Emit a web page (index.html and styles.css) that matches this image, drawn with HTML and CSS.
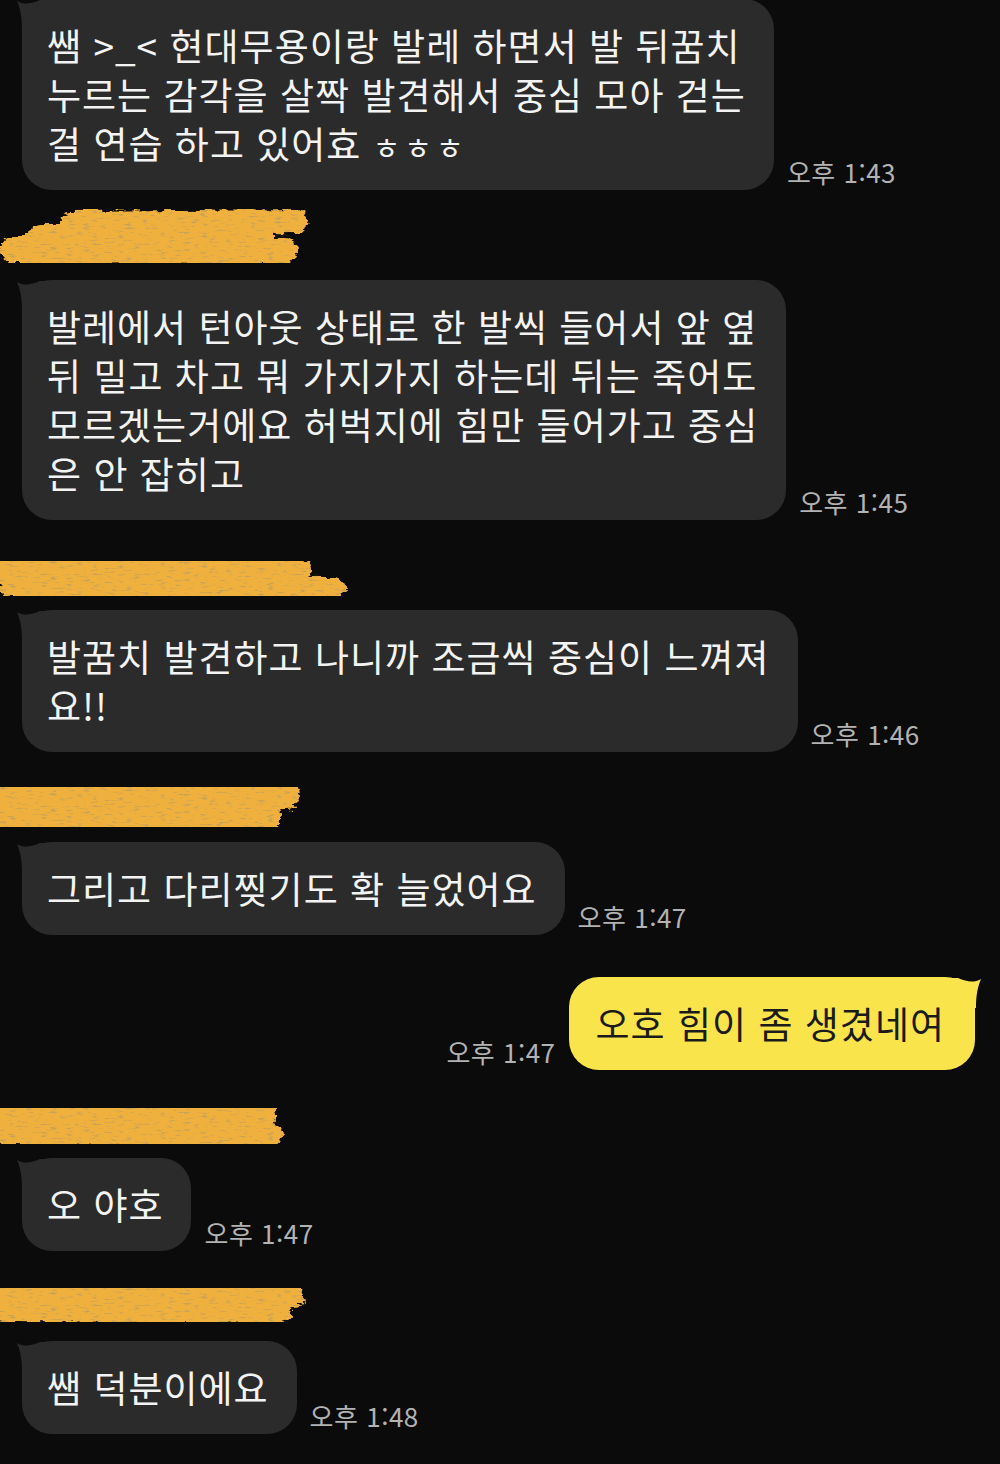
FILE: index.html
```html
<!DOCTYPE html>
<html lang="ko">
<head>
<meta charset="utf-8">
<title>Chat</title>
<link rel="stylesheet" href="styles.css">
</head>
<body>
<div class="chat">
  <svg class="defs" width="0" height="0" aria-hidden="true">
    <defs>
      <filter id="rough" x="-10%" y="-40%" width="120%" height="180%">
        <feTurbulence type="fractalNoise" baseFrequency="0.09 0.22" numOctaves="3" seed="3" result="n"/>
        <feDisplacementMap in="SourceGraphic" in2="n" scale="10" xChannelSelector="R" yChannelSelector="G" result="d"/>
        <feTurbulence type="fractalNoise" baseFrequency="0.12 0.5" numOctaves="2" seed="9" result="n2"/>
        <feColorMatrix in="n2" type="matrix" values="0 0 0 0 0.55  0 0 0 0 0.36  0 0 0 0 0.1  0 0 0 5 -2.9" result="spots"/>
        <feComposite in="spots" in2="d" operator="in" result="s2"/>
        <feMerge><feMergeNode in="d"/><feMergeNode in="s2"/></feMerge>
      </filter>
    </defs>
  </svg>

  <svg class="scribble-top" viewBox="0 0 120 14" aria-hidden="true">
    <g filter="url(#rough)" stroke="#efb03d" stroke-linecap="round" fill="none">
      <path d="M-4 0 L96 0" stroke-width="10"/>
    </g>
  </svg>

  <div class="row in first">
    <div class="bubble">쌤 &gt;_&lt; 현대무용이랑 발레 하면서 발 뒤꿈치<br>누르는 감각을 살짝 발견해서 중심 모아 걷는<br>걸 연습 하고 있어효 <span class="jamo">ㅎㅎㅎ</span></div>
    <span class="time">오후 1:43</span>
  </div>

  <div class="name">
    <svg viewBox="0 0 360 90" aria-hidden="true">
      <g filter="url(#rough)" stroke="#efb03d" stroke-linecap="round" fill="none">
        <path d="M72 33 L296 31" stroke-width="24"/>
        <path d="M40 46 L262 46" stroke-width="24"/>
        <path d="M14 60 L284 61" stroke-width="28"/>
      </g>
    </svg>
  </div>

  <div class="row in">
    <div class="bubble">발레에서 턴아웃 상태로 한 발씩 들어서 앞 옆<br>뒤 밀고 차고 뭐 가지가지 하는데 뒤는 죽어도<br>모르겠는거에요 허벅지에 힘만 들어가고 중심<br>은 안 잡히고</div>
    <span class="time">오후 1:45</span>
  </div>

  <div class="name">
    <svg viewBox="0 0 360 90" aria-hidden="true">
      <g filter="url(#rough)" stroke="#efb03d" stroke-linecap="round" fill="none">
        <path d="M8 51 L298 49" stroke-width="26"/>
        <path d="M10 67 L334 68" stroke-width="22"/>
      </g>
    </svg>
  </div>

  <div class="row in">
    <div class="bubble">발꿈치 발견하고 나니까 조금씩 중심이 느껴져<br>요!!</div>
    <span class="time">오후 1:46</span>
  </div>

  <div class="name">
    <svg viewBox="0 0 360 90" aria-hidden="true">
      <g filter="url(#rough)" stroke="#efb03d" stroke-linecap="round" fill="none">
        <path d="M6 46 L286 44" stroke-width="28"/>
        <path d="M6 66 L268 66" stroke-width="26"/>
      </g>
    </svg>
  </div>

  <div class="row in">
    <div class="bubble">그리고 다리찢기도 확 늘었어요</div>
    <span class="time">오후 1:47</span>
  </div>

  <div class="row out">
    <span class="time">오후 1:47</span>
    <div class="bubble">오호 힘이 좀 생겼네여</div>
  </div>

  <div class="name short">
    <svg viewBox="0 0 360 90" aria-hidden="true">
      <g filter="url(#rough)" stroke="#efb03d" stroke-linecap="round" fill="none">
        <path d="M6 48 L262 46" stroke-width="28"/>
        <path d="M6 64 L272 66" stroke-width="22"/>
      </g>
    </svg>
  </div>

  <div class="row in">
    <div class="bubble">오 야호</div>
    <span class="time">오후 1:47</span>
  </div>

  <div class="name">
    <svg viewBox="0 0 360 90" aria-hidden="true">
      <g filter="url(#rough)" stroke="#efb03d" stroke-linecap="round" fill="none">
        <path d="M6 45 L292 45" stroke-width="24"/>
        <path d="M6 61 L280 63" stroke-width="22"/>
      </g>
    </svg>
  </div>

  <div class="row in">
    <div class="bubble">쌤 덕분이에요</div>
    <span class="time">오후 1:48</span>
  </div>
</div>
</body>
</html>
```

FILE: styles.css
```css
html, body {
  margin: 0;
  background: #0b0b0b;
}

body {
  font-family: "Noto Sans CJK KR", "Noto Sans", sans-serif;
  height: 1464px;
  overflow: hidden;
}

.chat {
  position: relative;
}

.defs {
  position: absolute;
  width: 0;
  height: 0;
}

.scribble-top {
  position: absolute;
  left: 0;
  top: 0;
  width: 120px;
  height: 14px;
  z-index: 2;
}

.row {
  display: flex;
  align-items: flex-end;
  padding: 0 25px 0 22px;
}

.row.first {
  margin-top: -1px;
}

.row.out {
  justify-content: flex-end;
  margin-top: 42px;
}

.bubble {
  position: relative;
  background: #2b2b2b;
  color: #f3f3f3;
  font-size: 37px;
  letter-spacing: 1px;
  line-height: 49px;
  padding: 22px 28px 22px 25px;
  border-radius: 30px;
  white-space: nowrap;
}

.jamo {
  font-size: 30px;
  line-height: 0;
  letter-spacing: 4px;
}

.in .bubble::before {
  content: "";
  position: absolute;
  left: -6px;
  top: 1px;
  width: 30px;
  height: 30px;
  background: #2b2b2b;
  clip-path: path("M1 1 C8 5 15 4 24 0 L30 0 L30 30 L6 30 C6 20 5 10 1 1 Z");
}

.out .bubble {
  background: #f9e44c;
  color: #1b1b1b;
  padding: 22px 30px 22px 27px;
}

.out .bubble::before {
  content: "";
  position: absolute;
  right: -7px;
  top: 1px;
  width: 30px;
  height: 30px;
  background: #f9e44c;
  clip-path: path("M29 1 C22 5 15 4 6 0 L0 0 L0 30 L24 30 C24 20 25 10 29 1 Z");
}

.time {
  color: #b3b3b3;
  font-size: 26px;
  line-height: 30px;
  letter-spacing: 0.5px;
  margin: 0 0 3px 13px;
  white-space: nowrap;
}

.out .time {
  margin: 0 13px 3px 0;
}

.name {
  height: 90px;
}

.name.short {
  height: 88px;
}

.name svg {
  display: block;
  width: 360px;
  height: 90px;
}
```
